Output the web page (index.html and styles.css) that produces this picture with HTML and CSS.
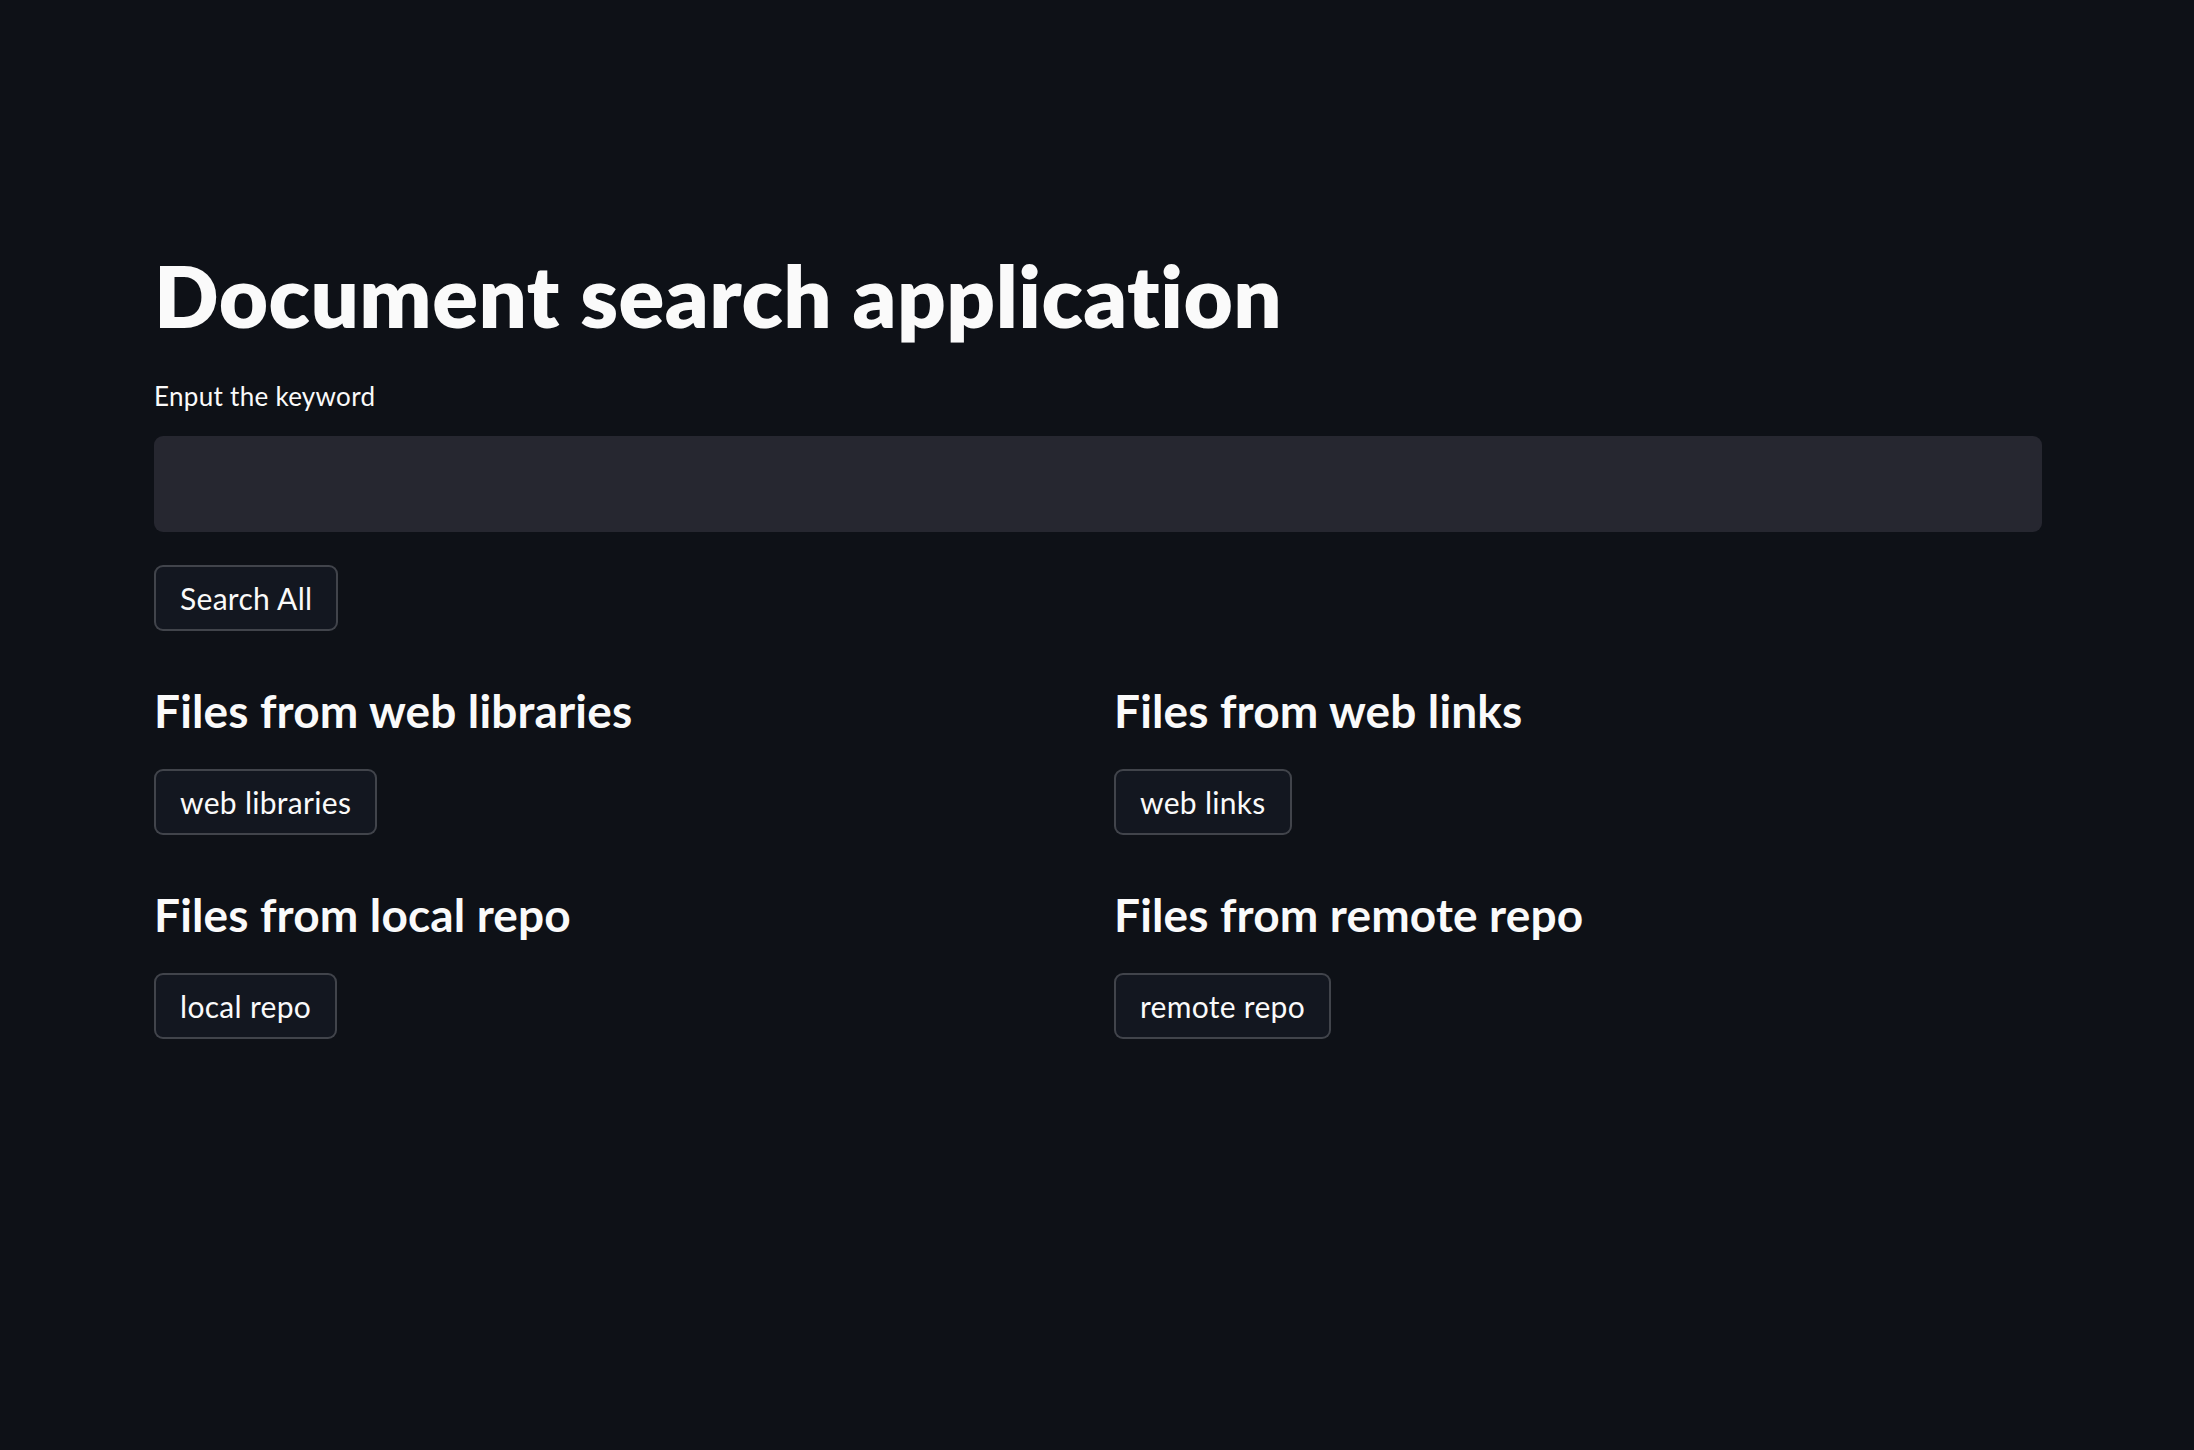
FILE: index.html
```html
<!DOCTYPE html>
<html lang="en">
<head>
<meta charset="utf-8">
<title>Document search application</title>
<link rel="stylesheet" href="styles.css">
</head>
<body>
<main class="app">
  <h1 class="title">Document search application</h1>
  <label class="label" for="kw">Enput the keyword</label>
  <input class="input" id="kw" type="text">
  <div class="search-row"><button class="btn">Search All</button></div>
  <div class="columns">
    <div class="col">
      <h3 class="section-title">Files from web libraries</h3>
      <div class="btn-row"><button class="btn">web libraries</button></div>
      <h3 class="section-title">Files from local repo</h3>
      <div class="btn-row"><button class="btn">local repo</button></div>
    </div>
    <div class="col">
      <h3 class="section-title">Files from web links</h3>
      <div class="btn-row"><button class="btn">web links</button></div>
      <h3 class="section-title">Files from remote repo</h3>
      <div class="btn-row"><button class="btn">remote repo</button></div>
    </div>
  </div>
</main>
</body>
</html>
```
FILE: styles.css
```css
html, body {
  margin: 0;
  padding: 0;
  background: #0e1117;
  color: #fafafa;
  font-family: Lato, "Noto Sans", sans-serif;
  font-variant-ligatures: none;
}
body {
  min-height: 1450px;
}
.app {
  display: flex;
  flex-direction: column;
  padding: 244px 152px 0 154px;
}
.title {
  margin: 0;
  font-size: 85px;
  line-height: 102px;
  font-weight: 800;
  letter-spacing: 0.5px;
}
.label {
  margin-top: 35px;
  font-size: 26px;
  line-height: 31px;
  letter-spacing: 0.3px;
}
.input {
  margin: 24px 0 0;
  height: 96px;
  box-sizing: border-box;
  border: none;
  border-radius: 9px;
  background: #262730;
  outline: none;
  padding: 0 20px;
  color: #fafafa;
  font: inherit;
  font-size: 30px;
}
.search-row, .btn-row {
  display: flex;
}
.search-row {
  margin-top: 33px;
}
.btn {
  height: 66px;
  box-sizing: border-box;
  display: flex;
  align-items: center;
  padding: 0 24px;
  border: 2px solid rgba(250, 250, 250, 0.2);
  border-radius: 9px;
  background: #131720;
  color: #fafafa;
  font-family: Lato, "Noto Sans", sans-serif;
  font-variant-ligatures: none;
  font-size: 30px;
  font-weight: 400;
  letter-spacing: 0.3px;
}
.columns {
  display: grid;
  grid-template-columns: 1fr 1fr;
  column-gap: 32px;
}
.col {
  display: flex;
  flex-direction: column;
}
.section-title {
  margin: 52px 0 0;
  font-size: 46px;
  line-height: 55px;
  font-weight: 700;
  letter-spacing: 0.15px;
}
.btn-row {
  margin-top: 31px;
}
```
